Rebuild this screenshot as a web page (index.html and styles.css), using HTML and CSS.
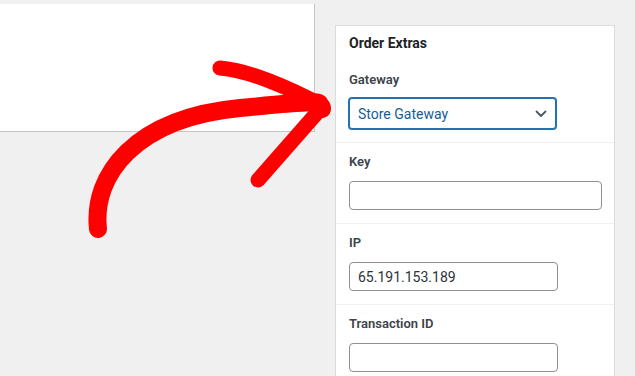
FILE: index.html
```html
<!DOCTYPE html>
<html lang="en">
<head>
    <meta charset="UTF-8">
    <meta name="viewport" content="width=device-width, initial-scale=1.0">
    <title>Order Extras</title>
    <link rel="stylesheet" href="styles.css">
</head>
<body>
    <div class="page">
        <div class="main">
            <div class="panel"></div>
        </div>
        <div class="sidebar">
            <div class="card">
                <h2 class="card-title">Order Extras</h2>
                <div class="field field-first">
                    <label class="field-label" for="gateway">Gateway</label>
                    <div class="select-wrap">
                        <select id="gateway" class="select">
                            <option>Store Gateway</option>
                        </select>
                        <svg class="chevron" width="12" height="8" viewBox="0 0 12 8">
                            <path d="M1.5 1.5 L6 6 L10.5 1.5" fill="none" stroke="#50575e" stroke-width="1.8" stroke-linecap="round" stroke-linejoin="round"/>
                        </svg>
                    </div>
                </div>
                <div class="field">
                    <label class="field-label" for="key">Key</label>
                    <input id="key" class="input input-wide" type="text">
                </div>
                <div class="field">
                    <label class="field-label" for="ip">IP</label>
                    <input id="ip" class="input" type="text" value="65.191.153.189">
                </div>
                <div class="field">
                    <label class="field-label" for="txn">Transaction ID</label>
                    <input id="txn" class="input" type="text">
                </div>
            </div>
        </div>
    </div>

    <!-- hand-drawn pointer -->
    <svg class="arrow" width="635" height="376" viewBox="0 0 635 376">
        <path d="M98 229 C 92 175, 135 118, 240 108 S 312 103, 322 109" fill="none" stroke="#ff0000" stroke-width="18" stroke-linecap="round"/>
        <path d="M220 68 C 248 70, 290 88, 323 106 L 258 180" fill="none" stroke="#ff0000" stroke-width="15" stroke-linecap="round" stroke-linejoin="round"/>
    </svg>
</body>
</html>
```

FILE: styles.css
```css
body {
    margin: 0;
    background-color: #f0f0f1;
    font-family: Roboto, 'Liberation Sans', sans-serif;
    color: #1d2327;
    overflow: hidden;
}
.page {
    display: flex;
    height: 376px;
}
.main {
    width: 315px;
    padding-top: 4px;
}
.panel {
    height: 127px;
    background-color: #fff;
    border-right: 1px solid #c3c4c7;
    border-bottom: 1px solid #c3c4c7;
}
.sidebar {
    flex: 1;
    padding: 25px 0 0 20px;
}
.card {
    width: 278px;
    height: 400px;
    background-color: #fff;
    border: 1px solid #dcdcde;
    border-bottom: none;
}
.card-title {
    margin: 0;
    padding: 7px 13px 0;
    font-size: 14px;
    font-weight: 700;
    line-height: 20px;
}
.field {
    display: flex;
    flex-direction: column;
    align-items: flex-start;
    gap: 9px;
    padding: 9px 13px 13px;
    border-top: 1px solid #f0f0f1;
}
.field-first {
    border-top: none;
    padding-top: 17px;
    gap: 8px;
}
.field-label {
    font-size: 13px;
    font-weight: 600;
    line-height: 20px;
    color: #3c434a;
}
.select-wrap {
    position: relative;
}
.select {
    appearance: none;
    width: 207px;
    height: 31px;
    padding: 0 28px 0 8px;
    border: 1px solid #2271b1;
    box-shadow: 0 0 0 1px #2271b1;
    border-radius: 3px;
    background-color: #fff;
    font-family: Roboto, 'Liberation Sans', sans-serif;
    font-size: 14px;
    color: #135e96;
    outline: none;
}
.chevron {
    position: absolute;
    right: 9px;
    top: 12px;
}
.input {
    box-sizing: border-box;
    width: 209px;
    height: 29px;
    padding: 0 8px;
    border: 1px solid #8c8f94;
    border-radius: 4px;
    font-family: Roboto, 'Liberation Sans', sans-serif;
    font-size: 14px;
    color: #2c3338;
}
.input-wide {
    width: 253px;
}
.arrow {
    position: absolute;
    left: 0;
    top: 0;
    pointer-events: none;
}
```
